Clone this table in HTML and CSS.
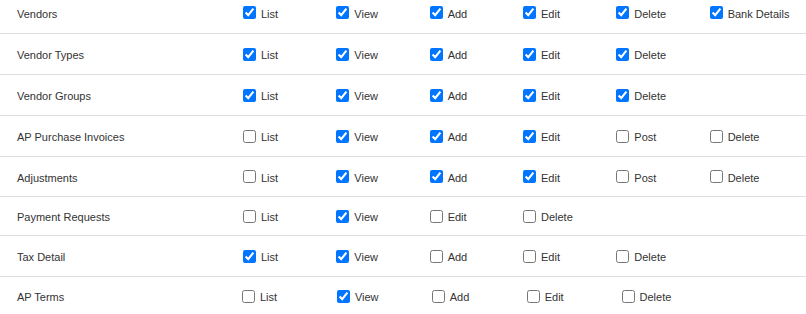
FILE: index.html
```html
<!DOCTYPE html>
<html lang="en">
<head>
<meta charset="utf-8">
<title>Permissions</title>
<link rel="stylesheet" href="styles.css">
</head>
<body>
<div class="perm-table">
  <div class="perm-row perm-row--first">
    <div class="perm-name">Vendors</div>
    <label class="perm"><input type="checkbox" checked><span>List</span></label>
    <label class="perm"><input type="checkbox" checked><span>View</span></label>
    <label class="perm"><input type="checkbox" checked><span>Add</span></label>
    <label class="perm"><input type="checkbox" checked><span>Edit</span></label>
    <label class="perm"><input type="checkbox" checked><span>Delete</span></label>
    <label class="perm"><input type="checkbox" checked><span>Bank Details</span></label>
  </div>
  <div class="perm-row">
    <div class="perm-name">Vendor Types</div>
    <label class="perm"><input type="checkbox" checked><span>List</span></label>
    <label class="perm"><input type="checkbox" checked><span>View</span></label>
    <label class="perm"><input type="checkbox" checked><span>Add</span></label>
    <label class="perm"><input type="checkbox" checked><span>Edit</span></label>
    <label class="perm"><input type="checkbox" checked><span>Delete</span></label>
  </div>
  <div class="perm-row">
    <div class="perm-name">Vendor Groups</div>
    <label class="perm"><input type="checkbox" checked><span>List</span></label>
    <label class="perm"><input type="checkbox" checked><span>View</span></label>
    <label class="perm"><input type="checkbox" checked><span>Add</span></label>
    <label class="perm"><input type="checkbox" checked><span>Edit</span></label>
    <label class="perm"><input type="checkbox" checked><span>Delete</span></label>
  </div>
  <div class="perm-row">
    <div class="perm-name">AP Purchase Invoices</div>
    <label class="perm"><input type="checkbox"><span>List</span></label>
    <label class="perm"><input type="checkbox" checked><span>View</span></label>
    <label class="perm"><input type="checkbox" checked><span>Add</span></label>
    <label class="perm"><input type="checkbox" checked><span>Edit</span></label>
    <label class="perm"><input type="checkbox"><span>Post</span></label>
    <label class="perm"><input type="checkbox"><span>Delete</span></label>
  </div>
  <div class="perm-row perm-row--h40">
    <div class="perm-name">Adjustments</div>
    <label class="perm"><input type="checkbox"><span>List</span></label>
    <label class="perm"><input type="checkbox" checked><span>View</span></label>
    <label class="perm"><input type="checkbox" checked><span>Add</span></label>
    <label class="perm"><input type="checkbox" checked><span>Edit</span></label>
    <label class="perm"><input type="checkbox"><span>Post</span></label>
    <label class="perm"><input type="checkbox"><span>Delete</span></label>
  </div>
  <div class="perm-row perm-row--h39">
    <div class="perm-name">Payment Requests</div>
    <label class="perm"><input type="checkbox"><span>List</span></label>
    <label class="perm"><input type="checkbox" checked><span>View</span></label>
    <label class="perm"><input type="checkbox"><span>Edit</span></label>
    <label class="perm"><input type="checkbox"><span>Delete</span></label>
  </div>
  <div class="perm-row">
    <div class="perm-name">Tax Detail</div>
    <label class="perm"><input type="checkbox" checked><span>List</span></label>
    <label class="perm"><input type="checkbox" checked><span>View</span></label>
    <label class="perm"><input type="checkbox"><span>Add</span></label>
    <label class="perm"><input type="checkbox"><span>Edit</span></label>
    <label class="perm"><input type="checkbox"><span>Delete</span></label>
  </div>
  <div class="perm-row perm-row--last">
    <div class="perm-name">AP Terms</div>
    <label class="perm"><input type="checkbox"><span>List</span></label>
    <label class="perm"><input type="checkbox" checked><span>View</span></label>
    <label class="perm"><input type="checkbox"><span>Add</span></label>
    <label class="perm"><input type="checkbox"><span>Edit</span></label>
    <label class="perm"><input type="checkbox"><span>Delete</span></label>
  </div>
</div>
</body>
</html>
```
FILE: styles.css
```css
html, body {
  margin: 0;
  padding: 0;
  background: #ffffff;
}

body {
  font-family: "Liberation Sans", Arial, sans-serif;
  font-size: 11px;
  color: #333333;
}

.perm-table {
  width: 806px;
}

.perm-row {
  display: grid;
  grid-template-columns: 243px repeat(6, 93.33px);
  align-items: center;
  box-sizing: border-box;
  height: 41px;
  border-bottom: 1px solid #dbdfe3;
}

.perm-row--first {
  height: 34px;
  padding-bottom: 8px;
}

.perm-row--h40 {
  height: 40px;
}

.perm-row--h39 {
  height: 39px;
}

.perm-row--last {
  grid-template-columns: 242px repeat(5, 94.9px);
  height: 38px;
  border-bottom: none;
}

.perm-name {
  padding-left: 17px;
  padding-top: 2px;
  white-space: nowrap;
}

.perm {
  display: flex;
  align-items: center;
  gap: 5px;
  white-space: nowrap;
}

.perm input {
  margin: 0;
  width: 13px;
  height: 13px;
}

.perm span {
  padding-top: 2px;
}
```
